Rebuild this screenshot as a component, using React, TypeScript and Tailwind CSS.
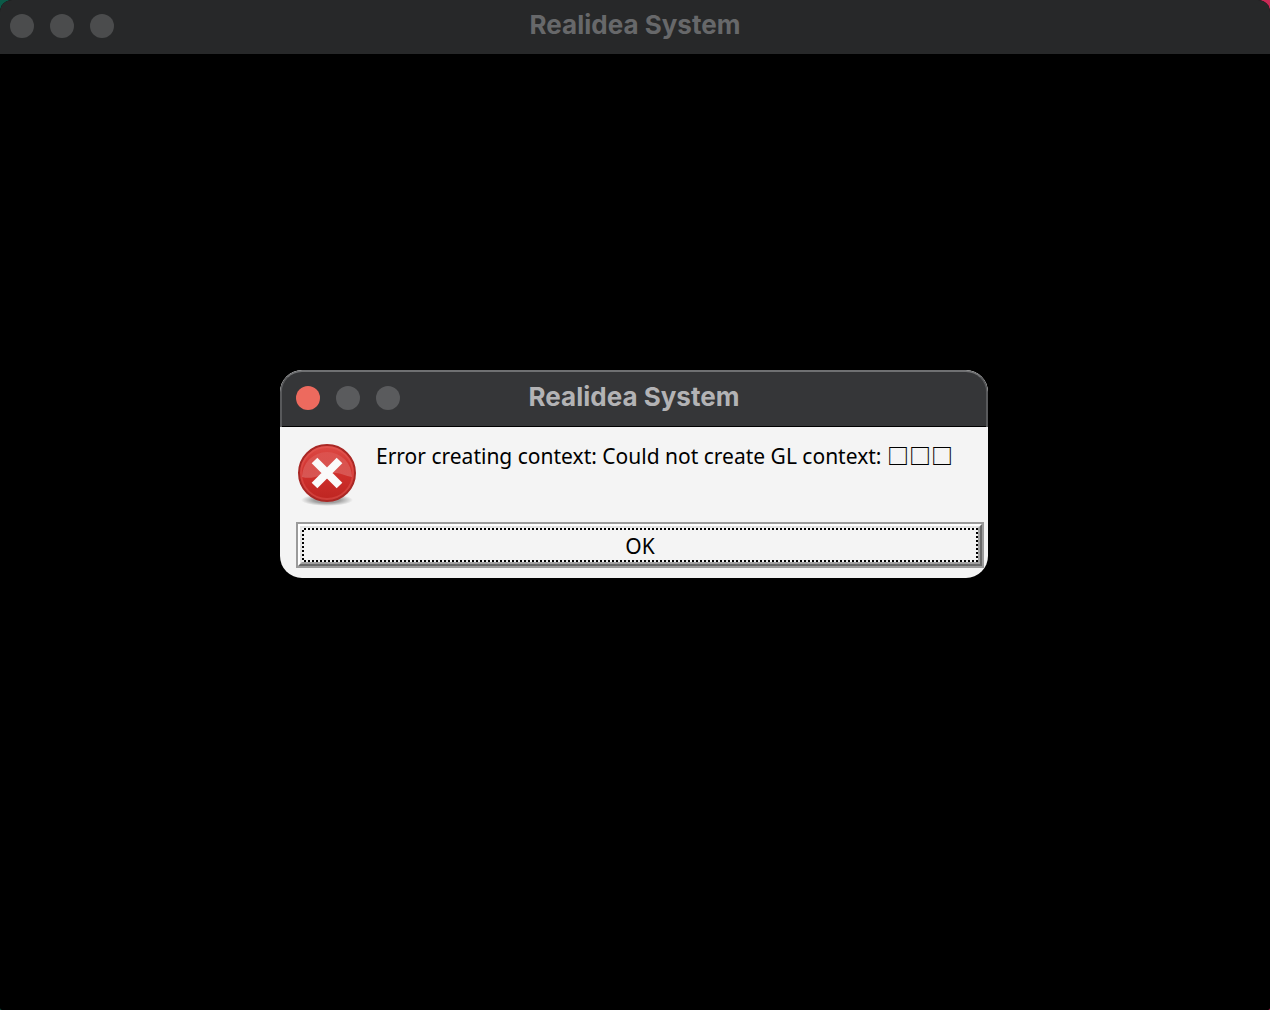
import { useId } from "react";

const TITLE = "Realidea System";

function ErrorIcon() {
  const id = useId();
  return (
    <svg viewBox="0 0 64 64" className="h-16 w-16 shrink-0" aria-hidden="true">
      <defs>
        <linearGradient id={`${id}-face`} x1="0" y1="0" x2="0" y2="1">
          <stop offset="0" stopColor="#dd4a45" />
          <stop offset="0.5" stopColor="#d0302c" />
          <stop offset="1" stopColor="#bd2521" />
        </linearGradient>
        <linearGradient id={`${id}-gloss`} x1="0" y1="0" x2="0" y2="1">
          <stop offset="0" stopColor="#fff" stopOpacity="0.08" />
          <stop offset="1" stopColor="#fff" stopOpacity="0.2" />
        </linearGradient>
        <radialGradient id={`${id}-shadow`}>
          <stop offset="0.5" stopColor="#000" stopOpacity="0.35" />
          <stop offset="1" stopColor="#000" stopOpacity="0" />
        </radialGradient>
      </defs>
      <ellipse cx="31" cy="58" rx="26" ry="6" fill={`url(#${id}-shadow)`} />
      <circle cx="31" cy="31" r="28" fill={`url(#${id}-face)`} stroke="#a92825" strokeWidth="2" />
      <circle cx="31" cy="31" r="26" fill="none" stroke="#e8655f" strokeOpacity="0.4" strokeWidth="2" />
      <path d="M6 35a25 25 0 1 1 50 0c-7-1-13-5-22-4-10 1-16 7-28 4z" fill={`url(#${id}-gloss)`} />
      <path d="M18.5 18.5 43.5 43.5M43.5 18.5 18.5 43.5" stroke="#fafafa" strokeWidth="8" />
    </svg>
  );
}

function Dialog() {
  return (
    <section
      role="alertdialog"
      aria-labelledby="dialog-title"
      aria-describedby="dialog-message"
      className="mx-auto w-full max-w-[708px] overflow-hidden rounded-[22px] bg-[#f4f4f4]"
    >
      <header className="relative flex h-[57px] items-center justify-center rounded-t-[22px] border-x-2 border-t-2 border-x-[#58595b] border-t-[#6f7072] bg-[#353638] shadow-[inset_0_-1px_0_#000]">
        <div className="absolute top-3.5 left-3.5 flex gap-4">
          <button type="button" aria-label="Close" className="h-6 w-6 rounded-full bg-[#ed6a5e]" />
          <button type="button" aria-label="Minimize" className="h-6 w-6 rounded-full bg-[#5a5b5d]" />
          <button type="button" aria-label="Zoom" className="h-6 w-6 rounded-full bg-[#5a5b5d]" />
        </div>
        <h2 id="dialog-title" className="pb-1.5 text-[26px] leading-8 font-bold text-[#b3b3b5]">
          {TITLE}
        </h2>
      </header>

      <div className="pt-[15px] pr-1 pb-2.5 pl-4 font-['Noto_Sans',sans-serif] text-[21px] leading-7 text-black">
        <div className="flex gap-4">
          <ErrorIcon />
          <p id="dialog-message" className="whitespace-nowrap">
            Error creating context: Could not create GL context:{" "}
            <span className="font-['Noto_Sans_CJK_JP',sans-serif] text-[22px] leading-none font-bold">□□□</span>
          </p>
        </div>

        {/* Classic raised button with a focus rectangle */}
        <button
          type="button"
          className="mt-4 block w-full border-2 border-[#9b9b9b] bg-[#f4f4f4]"
        >
          <span className="block border-2 border-t-white border-r-[#696969] border-b-[#696969] border-l-white">
            <span className="block border-2 border-t-[#e3e3e3] border-r-[#a0a0a0] border-b-[#a0a0a0] border-l-[#e3e3e3]">
              <span className="block bg-[repeating-conic-gradient(#000_0_25%,#f4f4f4_0_50%)] bg-[length:4px_4px] p-0.5">
                <span className="block bg-[#f4f4f4] pt-0.5 leading-7">OK</span>
              </span>
            </span>
          </span>
        </button>
      </div>
    </section>
  );
}

export default function App() {
  return (
    <main className="min-h-screen bg-[linear-gradient(90deg,#0c5a48_50%,#c92a56_50%)] font-['Inter',sans-serif]">
      <div className="min-h-screen overflow-hidden rounded-t-xl rounded-b-xs bg-black">
        <header className="relative flex h-[54px] items-center justify-center bg-[#272829]">
          <div className="absolute top-3.5 left-2.5 flex gap-4">
            <button type="button" aria-label="Close window" className="h-6 w-6 rounded-full bg-[#4b4c4d]" />
            <button type="button" aria-label="Minimize window" className="h-6 w-6 rounded-full bg-[#4b4c4d]" />
            <button type="button" aria-label="Zoom window" className="h-6 w-6 rounded-full bg-[#4b4c4d]" />
          </div>
          <h1 className="pb-1 text-[26px] leading-8 font-bold text-[#67686a]">{TITLE}</h1>
        </header>
        <div className="pt-[316px] pr-0.5">
          <Dialog />
        </div>
      </div>
    </main>
  );
}
